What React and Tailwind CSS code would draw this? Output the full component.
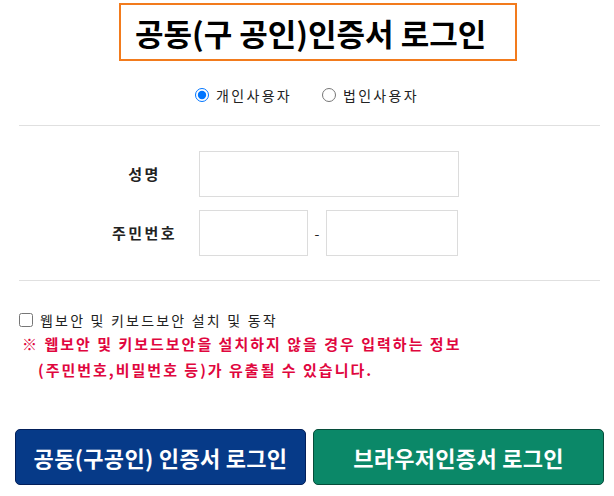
export default function App() {
    const font = { fontFamily: '"Noto Sans CJK KR", "Noto Sans", sans-serif' }

    return (
        <div className="w-[614px] h-[496px] bg-white text-[#222] overflow-hidden" style={font}>
            {/* title */}
            <div className="pt-[3px] pl-[119px]">
                <div className="w-[398px] h-[58px] border-2 border-[#f27b1d] flex items-center pl-[14px]">
                    <h1 className="text-[31px] font-bold text-black leading-none">공동(구 공인)인증서 로그인</h1>
                </div>
            </div>

            {/* user type */}
            <div className="flex justify-center items-center gap-[30px] mt-[26px] h-[16px] text-[14px]">
                <label className="flex items-center gap-[7px]">
                    <input type="radio" name="type" defaultChecked className="w-[14px] h-[14px] m-0" />
                    <span className="tracking-[2.3px]">개인사용자</span>
                </label>
                <label className="flex items-center gap-[7px]">
                    <input type="radio" name="type" className="w-[14px] h-[14px] m-0" />
                    <span className="tracking-[2.3px]">법인사용자</span>
                </label>
            </div>

            <div className="ml-[19px] w-[581px] h-px bg-[#e0e0e0] mt-[22px]" />

            {/* form */}
            <div className="ml-[90px] mt-[25px] flex flex-col gap-[13px]">
                <div className="flex items-center">
                    <div className="w-[109px] text-center text-[15px] font-bold tracking-[2.5px]">성명</div>
                    <input type="text" className="w-[260px] h-[46px] border border-[#dcdcdc] outline-none" />
                </div>
                <div className="flex items-center">
                    <div className="w-[109px] text-center text-[15px] font-bold tracking-[2.5px]">주민번호</div>
                    <input type="text" className="w-[109px] h-[46px] border border-[#dcdcdc] outline-none" />
                    <span className="w-[18px] text-center text-[14px]">-</span>
                    <input type="text" className="w-[132px] h-[46px] border border-[#dcdcdc] outline-none" />
                </div>
            </div>

            <div className="ml-[19px] w-[581px] h-px bg-[#e0e0e0] mt-[24px]" />

            {/* notice */}
            <div className="ml-[19px] mt-[30px]">
                <label className="flex items-center gap-[7px] text-[14px] h-[18px]">
                    <input type="checkbox" className="w-[14px] h-[14px] m-0" />
                    <span className="tracking-[2.2px]">웹보안 및 키보드보안 설치 및 동작</span>
                </label>
                <div className="mt-[2px] ml-[3px] text-[15px] font-bold text-[#e0063e] tracking-[2px] leading-[26px]">
                    <p>※ 웹보안 및 키보드보안을 설치하지 않을 경우 입력하는 정보</p>
                    <p className="pl-[16px]">(주민번호,비밀번호 등)가 유출될 수 있습니다.</p>
                </div>
            </div>

            {/* buttons */}
            <div className="ml-[15px] mt-[46px] flex gap-[7px]">
                <button className="w-[291px] h-[56px] rounded-[5px] bg-[#063a88] border border-[#021f5a] text-white text-[22px] font-bold tracking-[0.3px]">
                    공동(구공인) 인증서 로그인
                </button>
                <button className="w-[291px] h-[56px] rounded-[5px] bg-[#0b8868] border border-[#064d3a] text-white text-[22px] font-bold tracking-[0.3px]">
                    브라우저인증서 로그인
                </button>
            </div>
        </div>
    )
}
